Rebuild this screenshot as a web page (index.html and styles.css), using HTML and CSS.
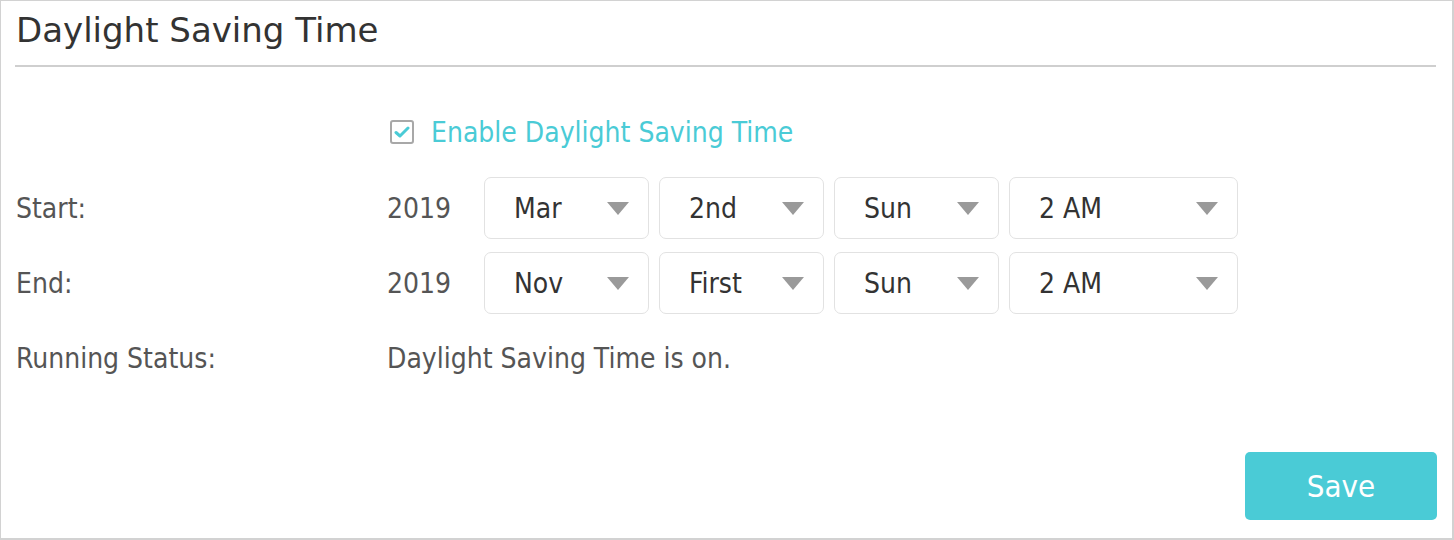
FILE: index.html
```html
<!DOCTYPE html>
<html>
<head>
<meta charset="utf-8">
<link rel="stylesheet" href="styles.css">
</head>
<body>
<div class="panel">
  <h1 class="title">Daylight Saving Time</h1>
  <div class="form">
    <div class="row">
      <div class="label"></div>
      <label class="check">
        <span class="box"><svg width="16" height="12" viewBox="0 0 16 12"><path d="M2 6.5 L6 10 L14 2" fill="none" stroke="#4acbd6" stroke-width="3" stroke-linecap="round" stroke-linejoin="round"/></svg></span>
        <span class="check-text">Enable Daylight Saving Time</span>
      </label>
    </div>
    <div class="row">
      <div class="label">Start:</div>
      <div class="fields">
        <span class="year">2019</span>
        <div class="select">Mar<span class="arrow"></span></div>
        <div class="select">2nd<span class="arrow"></span></div>
        <div class="select">Sun<span class="arrow"></span></div>
        <div class="select wide">2 AM<span class="arrow"></span></div>
      </div>
    </div>
    <div class="row">
      <div class="label">End:</div>
      <div class="fields">
        <span class="year">2019</span>
        <div class="select">Nov<span class="arrow"></span></div>
        <div class="select">First<span class="arrow"></span></div>
        <div class="select">Sun<span class="arrow"></span></div>
        <div class="select wide">2 AM<span class="arrow"></span></div>
      </div>
    </div>
    <div class="row">
      <div class="label">Running Status:</div>
      <div class="status">Daylight Saving Time is on.</div>
    </div>
  </div>
  <div class="actions">
    <button class="save">Save</button>
  </div>
</div>
</body>
</html>
```
FILE: styles.css
```css
html, body {
  margin: 0;
  padding: 0;
  background: #fff;
}
.panel {
  box-sizing: border-box;
  width: 1454px;
  height: 540px;
  border: 1px solid #d2d2d2;
  border-width: 1px 2px 2px 1px;
  padding: 0 16px 0 14px;
  font-family: "DejaVu Sans Condensed", "DejaVu Sans", sans-serif;
  color: #555;
}
.title {
  margin: 0;
  padding: 9px 0 0 1px;
  box-sizing: border-box;
  border-bottom: 2px solid #cfcfcf;
  font-family: "DejaVu Sans", sans-serif;
  font-weight: normal;
  font-size: 34px;
  line-height: 40px;
  color: #333;
  height: 66px;
}
.form {
  padding-top: 45px;
  padding-left: 1px;
}
.row {
  display: grid;
  grid-template-columns: 371px 1fr;
  align-items: center;
  height: 62px;
  margin-bottom: 13px;
  font-size: 28px;
}
.row:first-child {
  height: 40px;
  margin-bottom: 25px;
}
.label {
  color: #555;
}
.check {
  display: flex;
  align-items: center;
  gap: 17px;
  padding-left: 3px;
}
.box {
  box-sizing: border-box;
  width: 24px;
  height: 24px;
  border: 2px solid #a8a8a8;
  border-radius: 3px;
  display: flex;
  align-items: center;
  justify-content: center;
}
.check-text {
  color: #4acbd6;
}
.fields {
  display: flex;
  align-items: center;
}
.year {
  width: 97px;
  color: #555;
}
.select {
  box-sizing: border-box;
  position: relative;
  width: 165px;
  height: 62px;
  margin-right: 10px;
  border: 1px solid #e2e2e2;
  border-radius: 7px;
  padding-left: 29px;
  display: flex;
  align-items: center;
  color: #333;
}
.select.wide {
  width: 229px;
}
.arrow {
  position: absolute;
  right: 19px;
  top: 24px;
  width: 0;
  height: 0;
  border-left: 11px solid transparent;
  border-right: 11px solid transparent;
  border-top: 13px solid #9a9a9a;
}
.status {
  color: #555;
}
.actions {
  display: flex;
  justify-content: flex-end;
  padding-top: 50px;
}
.save {
  width: 192px;
  height: 68px;
  border: none;
  border-radius: 5px;
  background: #4acbd6;
  color: #fff;
  font-family: "DejaVu Sans Condensed", "DejaVu Sans", sans-serif;
  font-size: 31px;
  padding: 0;
  margin-right: -1px;
}
```
